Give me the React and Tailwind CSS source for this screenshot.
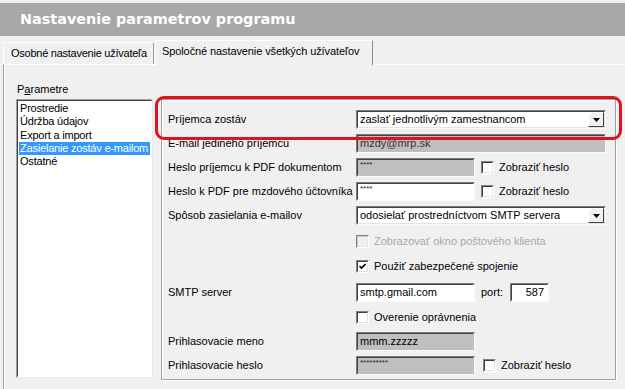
const Field = ({ w, gray, children, right }) => (
  <div
    className={`h-[19px] ${w} shrink-0 border border-t-[#7c7c7c] border-l-[#7c7c7c] border-r-[#fafafa] border-b-[#fafafa] ${gray ? 'bg-[#bfbfbf]' : 'bg-white'}`}
  >
    <div
      className={`h-full border border-t-[#404040] border-l-[#404040] border-r-transparent border-b-transparent flex items-center px-[2px] text-black leading-none ${right ? 'justify-end pr-[3px]' : ''}`}
    >
      {children}
    </div>
  </div>
)

const Stars = ({ n }) => <span className="text-[8px] -mt-[4px] text-[#222]">{'*'.repeat(n)}</span>

const Select = ({ children }) => (
  <div className="h-[19px] w-[250px] shrink-0 border border-t-[#7c7c7c] border-l-[#7c7c7c] border-r-[#fafafa] border-b-[#fafafa] bg-white">
    <div className="h-full border border-t-[#404040] border-l-[#404040] border-r-[#e3e3e3] border-b-[#e3e3e3] flex items-center pl-[2px]">
      <span className="flex-1">{children}</span>
      <div className="w-[16px] h-[15px] bg-[#f0f0f0] border border-t-white border-l-white border-r-[#404040] border-b-[#404040] flex items-center justify-center">
        <svg width="7" height="4" viewBox="0 0 7 4">
          <polygon points="0,0 7,0 3.5,4" fill="#000" />
        </svg>
      </div>
    </div>
  </div>
)

const Check = ({ checked, disabled, label, className = '' }) => (
  <div className={`flex items-center ${className}`}>
    <div
      className={`w-[13px] h-[13px] shrink-0 border border-t-[#808080] border-l-[#808080] border-r-white border-b-white ${disabled ? 'bg-[#f0f0f0]' : 'bg-white'}`}
    >
      <div className={`w-full h-full border ${disabled ? 'border-t-[#c8c8c8] border-l-[#c8c8c8]' : 'border-t-[#404040] border-l-[#404040]'} border-r-[#e3e3e3] border-b-[#e3e3e3] flex items-center justify-center`}>
        {checked && (
          <svg width="7" height="7" viewBox="0 0 7 7">
            <path d="M0.5 3 L2.5 5 L6.5 1" stroke="#000" strokeWidth="1.6" fill="none" />
          </svg>
        )}
      </div>
    </div>
    <span className={`ml-[5px] ${disabled ? 'text-[#a8a8a8]' : 'text-black'}`}>{label}</span>
  </div>
)

const Row = ({ h, label, children }) => (
  <div className={`flex items-center ${h}`}>
    <div className="w-[188px] shrink-0">{label}</div>
    {children}
  </div>
)

const items = ['Prostredie', 'Údržba údajov', 'Export a import', 'Zasielanie zostáv e-mailom', 'Ostatné']

export default function App() {
  return (
    <div className="relative w-[625px] h-[389px] overflow-hidden whitespace-nowrap bg-[#f0f0f0] pt-[3px] text-[11px] text-black font-['Liberation_Sans',Arial,sans-serif]">
      <div className="h-[33px] bg-[#a8a8a8] flex items-center pl-[20px]">
        <h1 className="text-white font-bold text-[14.4px] font-['DejaVu_Sans',Verdana,sans-serif]">
          Nastavenie parametrov programu
        </h1>
      </div>

      <div className="flex items-end h-[28px] pl-[3px]">
        <div className="h-[22px] w-[151px] border-t border-l border-r border-t-white border-l-white border-r-[#a0a0a0] flex items-center pl-[7px] tracking-[-0.25px]">
          Osobné nastavenie užívateľa
        </div>
        <div className="relative -mb-[1px] ml-[1px] h-[25px] w-[218px] bg-[#f0f0f0] border-t border-l border-r border-t-white border-l-white border-r-[#8a8a8a] flex items-start pt-[2px] pl-[6px] tracking-[-0.1px]">
          Spoločné nastavenie všetkých užívateľov
        </div>
      </div>

      <div className="ml-[3px] h-[330px] border-t border-l border-t-white border-l-[#a0a0a0] flex">
        <div className="pl-[12px] pt-[18px] shadow-[inset_1px_0_0_#ffffff]">
          <div className="h-[13px] leading-[13px] pl-[1px]">
            P<span className="underline">a</span>rametre
          </div>
          <div className="mt-[3px] w-[137px] h-[279px] bg-white border border-t-[#a0a0a0] border-l-[#a0a0a0] border-r-[#e8e8e8] border-b-[#e8e8e8]">
            <div className="h-full border border-t-[#404040] border-l-[#404040] border-r-transparent border-b-transparent pt-[1px] px-[1px] overflow-hidden">
              {items.map((t, i) => (
                <div
                  key={t}
                  className={`h-[13.3px] leading-[13px] pl-[1px] tracking-[-0.2px] ${i === 3 ? 'bg-[#3399ff] text-white' : ''}`}
                >
                  {t}
                </div>
              ))}
            </div>
          </div>
        </div>

        <div className="ml-[8px] mt-[34px] w-[455px] h-[281px] border border-[#a0a0a0] shadow-[inset_1px_1px_0_#ffffff,1px_1px_0_#ffffff] pl-[6px] pt-[7px]">
          <Row h="h-[25px]" label="Príjemca zostáv">
            <Select>zaslať jednotlivým zamestnancom</Select>
          </Row>
          <Row h="h-[23px]" label="E-mail jediného príjemcu">
            <Field w="w-[250px]" gray>
              <span className="text-[#333]">mzdy@mrp.sk</span>
            </Field>
          </Row>
          <Row h="h-[24px]" label="Heslo príjemcu k PDF dokumentom">
            <Field w="w-[119px]" gray>
              <Stars n={4} />
            </Field>
            <Check label="Zobraziť heslo" className="ml-[6px]" />
          </Row>
          <Row h="h-[24px]" label="Heslo k PDF pre mzdového účtovníka">
            <Field w="w-[119px]">
              <Stars n={4} />
            </Field>
            <Check label="Zobraziť heslo" className="ml-[6px]" />
          </Row>
          <Row h="h-[25px]" label="Spôsob zasielania e-mailov">
            <Select>odosielať prostredníctvom SMTP servera</Select>
          </Row>
          <Row h="h-[26px]" label="">
            <Check disabled label="Zobrazovať okno poštového klienta" />
          </Row>
          <Row h="h-[25px]" label="">
            <Check checked label="Použiť zabezpečené spojenie" />
          </Row>
          <Row h="h-[26px]" label="SMTP server">
            <Field w="w-[119px]">smtp.gmail.com</Field>
            <span className="ml-[6px] w-[29px]">port:</span>
            <Field w="w-[39px]" right>587</Field>
          </Row>
          <Row h="h-[24px]" label="">
            <Check label="Overenie oprávnenia" />
          </Row>
          <Row h="h-[24px]" label="Prihlasovacie meno">
            <Field w="w-[119px]" gray>mmm.zzzzz</Field>
          </Row>
          <Row h="h-[24px]" label="Prihlasovacie heslo">
            <Field w="w-[119px]" gray>
              <Stars n={9} />
            </Field>
            <Check label="Zobraziť heslo" className="ml-[8px]" />
          </Row>
        </div>
      </div>

      <div className="absolute left-[155px] top-[96px] w-[467px] h-[44px] border-[3px] border-[#e0121a] rounded-[9px]" />
    </div>
  )
}
